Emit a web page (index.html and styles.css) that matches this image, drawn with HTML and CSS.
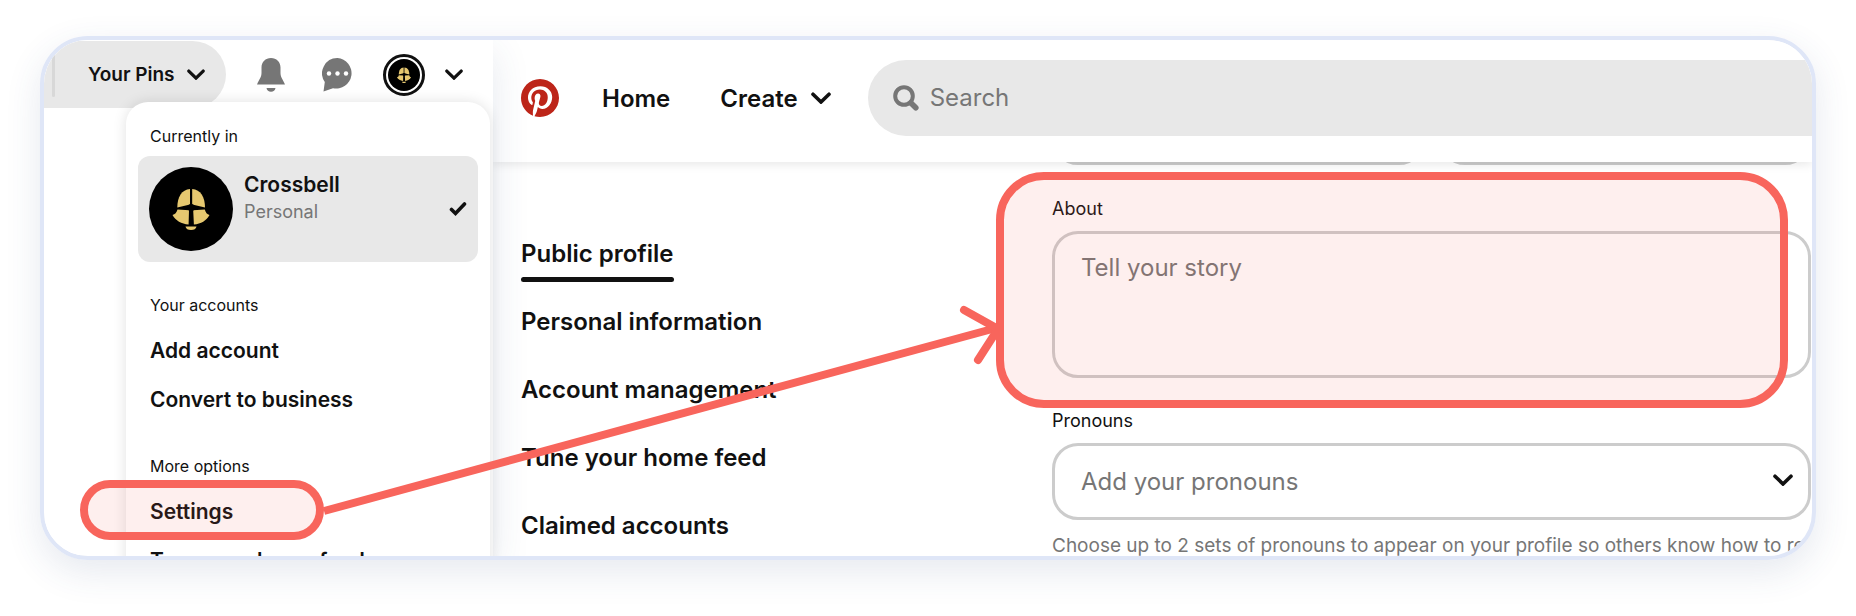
FILE: index.html
```html
<!DOCTYPE html>
<html lang="en">
<head>
<meta charset="utf-8">
<title>Edit your profile</title>
<link rel="stylesheet" href="styles.css">
</head>
<body>
<svg class="defs" aria-hidden="true">
  <symbol id="chevron" viewBox="0 0 20 12"><path d="M2 2.200 10 10 18 2.200" fill="none" stroke="currentColor" stroke-width="3.600" stroke-linecap="round"/></symbol>
  <symbol id="crossbell" viewBox="0 0 84 84">
    <circle cx="42" cy="42" r="42" fill="#000"/>
    <g fill="#e6c870">
      <path d="M41 22v15.500L28.300 40.500c0-10.500 4.500-18 12.700-18.500z"/>
      <path d="M43.200 22v15.500L56 40.500c0-10.500-4.500-18-12.800-18.500z"/>
      <path d="M28.500 42.500 40 43.200 39.600 57.500C32.500 57 26.500 53.500 23.500 48c2.500-.5 4.200-2.500 5-5.500z"/>
      <path d="M55.800 42.500 44.200 43.200 44.900 57.500C52 57 57.500 53.500 60.500 48c-2.500-.5-3.900-2.500-4.700-5.500z"/>
      <path d="M36.500 59.500h11c-.5 2.500-2.500 3.500-5.500 3.500s-5-1-5.500-3.500z"/>
    </g>
    <circle cx="42.200" cy="40.500" r="3.500" fill="#000"/>
  </symbol>
</svg>

<main class="board">
  <section class="account">
    <div class="topbar">
      <button class="pins"><span>Your Pins</span><svg class="chev-sm"><use href="#chevron"/></svg></button>
      <button class="icon-btn" aria-label="Notifications">
        <svg class="bell" viewBox="0 0 28 34"><path d="M14 0C8.500 0 4.500 4 4.500 9.500v5.500c0 4.500-2.500 6.500-4.500 11.500h28c-2-5-4.500-7-4.500-11.500V9.500C23.500 4 19.500 0 14 0z"/><path d="M9.500 30h9c-.5 2.500-2 3.800-4.500 3.800S10 32.500 9.500 30z"/></svg>
      </button>
      <button class="icon-btn" aria-label="Messages">
        <svg class="chat" viewBox="0 0 31 34"><path d="M15.500 0A15.300 15.300 0 1 1 11 30.200L1.500 33.500 2.800 24A15.300 15.300 0 0 1 15.500 0z"/><g fill="#fff"><circle cx="7" cy="15.500" r="2.200"/><circle cx="15.500" cy="15.500" r="2.200"/><circle cx="24" cy="15.500" r="2.200"/></g></svg>
      </button>
      <button class="avatar-btn" aria-label="Your profile"><svg class="avatar-sm"><use href="#crossbell"/></svg></button>
      <button class="icon-btn" aria-label="Accounts"><svg class="chev-sm"><use href="#chevron"/></svg></button>
    </div>

    <nav class="menu">
      <h2 class="menu-label">Currently in</h2>
      <a class="current" href="#">
        <svg class="avatar-lg"><use href="#crossbell"/></svg>
        <span class="who"><strong>Crossbell</strong><span>Personal</span></span>
        <svg class="check" viewBox="0 0 18 16"><path d="M2.500 8.500 6.500 12.500 15.500 3" fill="none" stroke="currentColor" stroke-width="3.600" stroke-linecap="round"/></svg>
      </a>
      <h2 class="menu-label">Your accounts</h2>
      <ul>
        <li><a href="#">Add account</a></li>
        <li><a href="#">Convert to business</a></li>
      </ul>
      <h2 class="menu-label">More options</h2>
      <ul>
        <li class="marked"><a href="#">Settings</a></li>
        <li><a href="#">Tune your home feed</a></li>
      </ul>
    </nav>
  </section>

  <section class="profile">
    <header class="site-head">
      <a class="logo" href="#" aria-label="Pinterest"><svg viewBox="0 0 24 24"><circle cx="12" cy="12" r="11.500" fill="#fff"/><path fill="#bd2519" d="M12 0C5.400 0 0 5.400 0 12c0 5.100 3.200 9.400 7.600 11.200-.1-.9-.2-2.400 0-3.400l1.400-6s-.4-.7-.4-1.800c0-1.700 1-2.900 2.200-2.900 1 0 1.500.8 1.500 1.700 0 1-.7 2.600-1 4-.3 1.200.6 2.200 1.800 2.200 2.100 0 3.800-2.200 3.800-5.500 0-2.900-2.100-4.900-5-4.900-3.400 0-5.400 2.600-5.400 5.200 0 1 .4 2.100.9 2.700.1.100.1.200.1.300l-.3 1.400c-.1.200-.2.300-.4.200-1.500-.7-2.400-2.900-2.400-4.600 0-3.800 2.800-7.300 7.900-7.300 4.200 0 7.400 3 7.400 6.900 0 4.100-2.600 7.500-6.200 7.500-1.200 0-2.400-.6-2.800-1.400l-.7 2.900c-.3 1-1 2.300-1.500 3.100 1.100.3 2.300.5 3.500.5 6.600 0 12-5.400 12-12S18.600 0 12 0z"/></svg></a>
      <a class="head-link" href="#">Home</a>
      <button class="head-link create"><span>Create</span><svg class="chev"><use href="#chevron"/></svg></button>
      <label class="search">
        <svg viewBox="0 0 26 26"><circle cx="11" cy="11" r="8.800" fill="none" stroke="currentColor" stroke-width="4"/><path d="M18 18l4.800 4.800" stroke="currentColor" stroke-width="5.600" stroke-linecap="round"/></svg>
        <input type="search" placeholder="Search" aria-label="Search">
      </label>
    </header>

    <div class="content">
      <nav class="side">
        <a class="active" href="#">Public profile</a>
        <a href="#">Personal information</a>
        <a href="#">Account management</a>
        <a href="#">Tune your home feed</a>
        <a href="#">Claimed accounts</a>
      </nav>
      <form class="form">
        <div class="names">
          <input type="text" aria-label="First name">
          <input type="text" aria-label="Last name">
        </div>
        <div class="field about">
          <label for="about">About</label>
          <textarea id="about" placeholder="Tell your story"></textarea>
        </div>
        <div class="field">
          <label for="pronouns">Pronouns</label>
          <div class="select">
            <select id="pronouns"><option>Add your pronouns</option></select>
            <svg class="chev"><use href="#chevron"/></svg>
          </div>
          <p class="help">Choose up to 2 sets of pronouns to appear on your profile so others know how to refer</p>
        </div>
      </form>
    </div>
  </section>

  <svg class="arrow" viewBox="0 0 696 220" aria-hidden="true">
    <path d="M4 207 676 24" />
    <path d="M644 6 678 25 658 56" stroke-linecap="round"/>
  </svg>
</main>
</body>
</html>
```
FILE: styles.css
```css
*, *::before, *::after { box-sizing: border-box; }

body {
  margin: 0;
  height: 100vh;
  padding: 36px 40px 56px;
  display: flex;
  background: #fff;
  color: #111;
  font-family: Inter, "Liberation Sans", sans-serif;
}

a { color: inherit; text-decoration: none; }
button { border: 0; padding: 0; background: none; color: inherit; font: inherit; }
ul { list-style: none; margin: 0; padding: 0; }
.defs { position: absolute; width: 0; height: 0; }

.board {
  position: relative;
  flex: 1;
  min-width: 0;
  display: flex;
  overflow: hidden;
  border: 4px solid #dfe6f7;
  border-radius: 48px;
  box-shadow: 0 12px 36px rgba(50, 70, 120, .12);
}

/* account menu */
.account {
  position: relative;
  z-index: 1;
  flex: none;
  width: 449px;
  background: #fff;
  box-shadow: 0 12px 36px rgba(50, 70, 120, .12);
}
.topbar { display: flex; align-items: center; height: 68px; padding-top: 1px; }
.pins {
  display: flex;
  align-items: center;
  gap: 12px;
  width: 182px;
  height: 67px;
  padding-left: 32px;
  margin-right: 31px;
  border-radius: 0 34px 34px 0;
  background: #e8e8e8;
  font-size: 19px;
  font-weight: 600;
}
.pins::before {
  content: "";
  order: -1;
  width: 3px;
  height: 44px;
  margin-left: -24px;
  margin-right: 21px;
  border-radius: 2px;
  background: #d8d8d8;
}
.icon-btn { display: flex; }
.bell { width: 28px; height: 34px; margin-right: 37px; fill: #767676; }
.chat { width: 31px; height: 34px; margin-right: 30px; fill: #767676; }
.avatar-btn {
  display: flex;
  margin-right: 20px;
  padding: 2px;
  border: 3px solid #111;
  border-radius: 50%;
}
.avatar-sm { width: 32px; height: 32px; }
.chev-sm { width: 18px; height: 11px; }
.chev { width: 20px; height: 12px; }

.menu {
  position: absolute;
  top: 62px;
  left: 82px;
  width: 364px;
  padding: 24px 12px 12px;
  border-radius: 22px;
  background: #fff;
  box-shadow: 0 0 14px rgba(0, 0, 0, .12);
}
.menu-label { margin: 33px 12px 11px; font-size: 16px; line-height: 20px; font-weight: 400; }
.menu-label:first-child { margin: 0 12px 10px; }
ul + .menu-label { margin-top: 32px; }
.current {
  display: flex;
  gap: 11px;
  height: 106px;
  padding: 11px;
  border-radius: 12px;
  background: #e8e8e8;
}
.avatar-lg { flex: none; width: 84px; height: 84px; }
.who { flex: 1; display: flex; flex-direction: column; padding-top: 4px; font-size: 18px; line-height: 27px; color: #767676; }
.who strong { font-size: 21px; font-weight: 600; color: #111; }
.check { align-self: center; width: 18px; height: 16px; }
.menu li { position: relative; font-size: 21px; line-height: 49px; font-weight: 600; }
.menu li a { display: block; padding: 0 12px; white-space: nowrap; }

/* settings page */
.profile { flex: 1; min-width: 0; overflow: hidden; display: flex; flex-direction: column; }
.site-head {
  position: relative;
  display: flex;
  flex: none;
  align-items: center;
  height: 122px;
  padding: 0 0 6px 28px;
  background: #fff;
  box-shadow: 0 2px 10px rgba(0, 0, 0, .1);
}
.logo { width: 38px; height: 38px; margin-right: 43px; }
.logo svg { display: block; }
.head-link { font-size: 24px; font-weight: 600; margin-right: 50px; }
.create { display: flex; align-items: center; gap: 13px; margin-right: 37px; }
.search {
  flex: 1;
  display: flex;
  align-items: center;
  gap: 11px;
  height: 76px;
  padding-left: 25px;
  border-radius: 38px 0 0 38px;
  background: #e8e8e8;
  color: #767676;
}
.search svg { flex: none; width: 26px; height: 26px; }
.search input { flex: 1; min-width: 0; border: 0; padding: 0; background: none; outline: 0; font: 24px/30px Inter, sans-serif; }
::placeholder { color: #767676; opacity: 1; }

.content { flex: 1; min-height: 0; display: flex; }
.side {
  display: flex;
  flex-direction: column;
  align-items: flex-start;
  gap: 28px;
  width: 532px;
  padding: 72px 0 0 28px;
  font-size: 24px;
  line-height: 40px;
  font-weight: 600;
}
.side a { white-space: nowrap; }
.side .active { position: relative; }
.side .active::after {
  content: "";
  position: absolute;
  left: 0;
  right: 0;
  bottom: -8px;
  height: 5px;
  border-radius: 3px;
  background: #111;
}
.form { flex: 1; min-width: 0; padding: 0 1px 0 27px; display: flex; flex-direction: column; }
.names { display: flex; gap: 14px; height: 3px; align-items: flex-end; }
.names input { flex: 1; min-width: 0; height: 76px; }
.form input, textarea, select {
  display: block;
  width: 100%;
  border: 3px solid #ccc;
  border-radius: 26px;
  background: #fff;
  font: 24px/30px Inter, sans-serif;
  color: #767676;
}
.field { position: relative; }
.field label { display: block; font-size: 18px; line-height: 20px; }
.about { padding-top: 34px; margin-bottom: 33px; }
textarea { height: 147px; margin-top: 12px; padding: 19px 26px; resize: none; }
.select { position: relative; margin-top: 12px; }
select { height: 77px; padding: 1px 26px 0; appearance: none; }
.select .chev { position: absolute; right: 18px; top: 31px; pointer-events: none; }
.help { margin: 14px 0 0; font-size: 19px; line-height: 24px; color: #767676; white-space: nowrap; }

/* callouts */
.marked::after, .about::after {
  content: "";
  position: absolute;
  border: 8px solid #f8655c;
  background: rgba(248, 101, 92, .1);
  background-clip: padding-box;
  pointer-events: none;
}
.marked::after { top: -7px; bottom: -4px; left: -58px; width: 244px; border-radius: 30px; }
.about::after { top: 7px; bottom: -30px; left: -56px; right: 23px; border-radius: 48px; }
.arrow {
  position: absolute;
  z-index: 2;
  left: 276px;
  top: 264px;
  width: 696px;
  height: 220px;
  fill: none;
  stroke: #f8655c;
  stroke-width: 8;
  pointer-events: none;
}
```
